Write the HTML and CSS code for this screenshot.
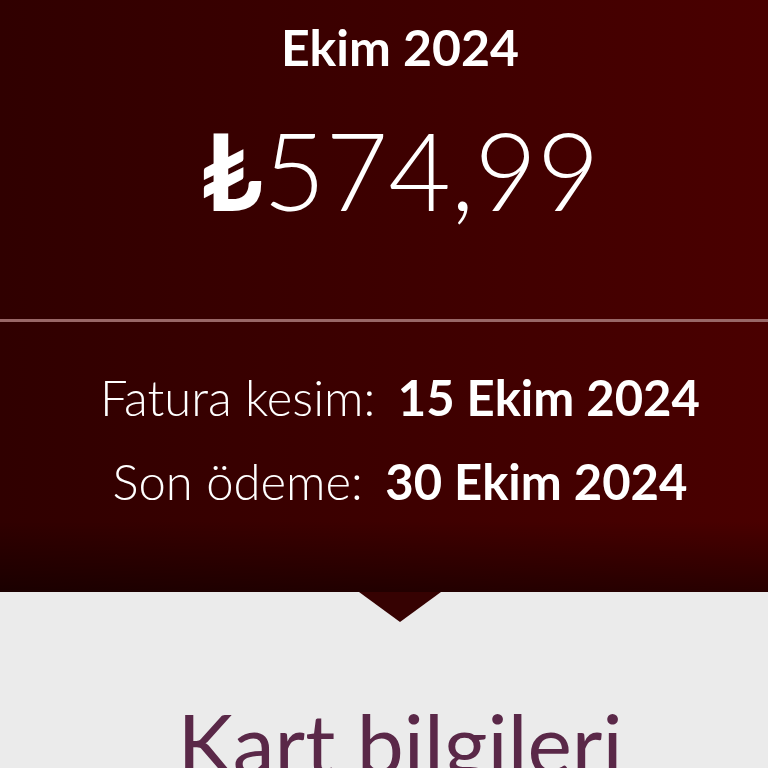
FILE: index.html
```
<!DOCTYPE html>
<html lang="tr">
<head>
  <meta charset="UTF-8">
  <meta name="viewport" content="width=device-width, initial-scale=1.0">
  <title>Fatura</title>
  <link rel="stylesheet" href="styles.css">
</head>
<body>
  <!-- Fatura özeti -->
  <div class="bill">
    <div class="bill-top">
      <h1 class="bill-month">Ekim 2024</h1>
      <div class="bill-amount"><span class="currency">₺</span>574,99</div>
    </div>

    <div class="bill-dates">
      <p><span class="label">Fatura kesim:</span> <strong>15 Ekim 2024</strong></p>
      <p><span class="label">Son ödeme:</span> <strong>30 Ekim 2024</strong></p>
    </div>
  </div>

  <!-- Kart bilgileri -->
  <div class="card-section">
    <h2>Kart bilgileri</h2>
  </div>
</body>
</html>
```

FILE: styles.css
```
* {
  margin: 0;
  padding: 0;
  box-sizing: border-box;
}

body {
  font-family: 'Lato', 'Open Sans', sans-serif;
  background-color: #ebebeb;
  overflow: hidden;
}

.bill {
  position: relative;
  height: 592px;
  color: #ffffff;
  background:
    linear-gradient(to bottom, rgba(0, 0, 0, 0) 0%, rgba(0, 0, 0, 0) 88%, rgba(0, 0, 0, 0.45) 100%),
    linear-gradient(to right, #300000, #4a0000);
}

/* Ok işareti */
.bill::after {
  content: "";
  position: absolute;
  left: 359px;
  bottom: -30px;
  border-left: 41px solid transparent;
  border-right: 41px solid transparent;
  border-top: 30px solid #360202;
}

.bill-top {
  height: 322px;
  padding: 20px 0 0 32px;
  text-align: center;
  border-bottom: 3px solid #996767;
}

.bill-month {
  font-size: 50px;
  font-weight: 700;
  line-height: 54px;
}

.bill-amount {
  margin-top: 40px;
  font-size: 108px;
  font-weight: 300;
  line-height: 110px;
}

.bill-amount .currency {
  font-weight: 700;
}

.bill-dates {
  padding: 33px 0 0 32px;
  text-align: center;
  font-size: 49px;
  line-height: 84px;
}

.bill-dates .label {
  font-weight: 300;
  margin-right: 10px;
}

.bill-dates strong {
  font-weight: 700;
}

.card-section {
  padding-top: 106px;
  padding-left: 32px;
  text-align: center;
}

.card-section h2 {
  font-size: 84px;
  font-weight: 400;
  color: #5a2848;
  line-height: 90px;
}
```
